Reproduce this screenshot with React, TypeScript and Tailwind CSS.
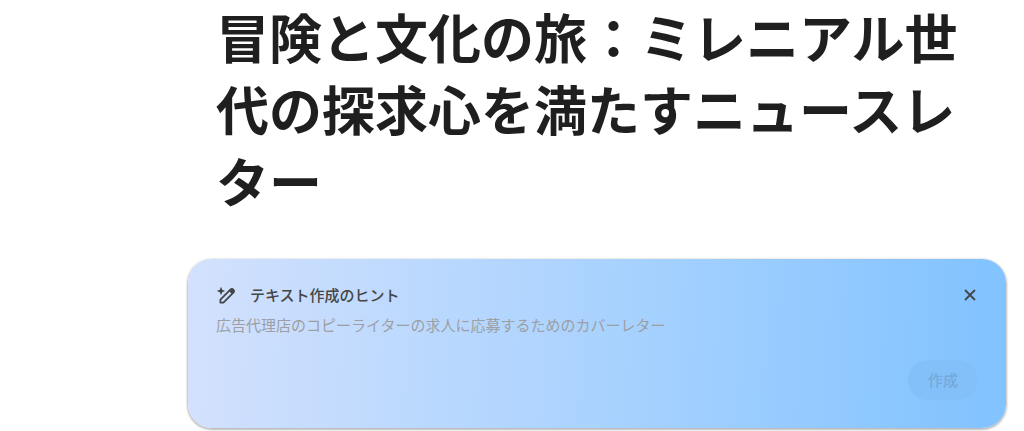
import React, { useState } from "react";

function MagicPencilIcon() {
  return (
    <svg viewBox="0 0 20 20" className="size-5 shrink-0" fill="none" aria-hidden="true">
      <path
        d="M5 1.8 L6.2 4.8 L9.2 6 L6.2 7.2 L5 10.2 L3.8 7.2 L0.8 6 L3.8 4.8 Z"
        fill="#444746"
      />
      <path
        d="M4.4 17.6 V14.6 L14.6 4.4 Q15.9 3.3 17.2 4.5 L17.5 4.8 Q18.7 6.1 17.6 7.4 L7.4 17.6 Z"
        stroke="#444746"
        strokeWidth="1.8"
        strokeLinejoin="round"
      />
      <path
        d="M12.9 6.1 L14.6 4.4 Q15.9 3.3 17.2 4.5 L17.5 4.8 Q18.7 6.1 17.6 7.4 L15.9 9.1 Z"
        fill="#444746"
      />
    </svg>
  );
}

function CloseIcon() {
  return (
    <svg viewBox="0 0 12 12" className="size-3" fill="none" aria-hidden="true">
      <path d="M1 1 L11 11 M11 1 L1 11" stroke="#444746" strokeWidth="1.8" />
    </svg>
  );
}

function PromptCard() {
  const [prompt, setPrompt] = useState("");
  return (
    <form
      onSubmit={(event) => event.preventDefault()}
      className="rounded-3xl bg-linear-[93deg,#d3e1fd_0%,#a0cfff_62%,#83c3ff_97%] px-7 pt-6 pb-7 shadow-[0_1px_2px_1px_rgba(60,64,67,0.35)]"
    >
      <div className="flex items-center justify-between">
        <label
          htmlFor="prompt"
          className="flex items-center gap-3.5 text-[15px] leading-6 font-medium text-[#444746]"
        >
          <MagicPencilIcon />
          テキスト作成のヒント
        </label>
        <button type="button" aria-label="閉じる" className="flex h-6 w-4 items-center justify-center">
          <CloseIcon />
        </button>
      </div>
      <textarea
        id="prompt"
        rows={1}
        value={prompt}
        onChange={(event) => setPrompt(event.target.value)}
        placeholder="広告代理店のコピーライターの求人に応募するためのカバーレター"
        className="mt-1.5 block w-full resize-none text-[15px] leading-6 text-[#444746] outline-none placeholder:text-[#9c9fa3]"
      />
      <div className="mt-[23px] flex justify-end">
        <button
          type="submit"
          disabled={!prompt}
          className="rounded-full bg-[#83c0fa] px-5 py-2 text-[15px] leading-6 font-medium text-[#74a9d8]"
        >
          作成
        </button>
      </div>
    </form>
  );
}

export default function App() {
  return (
    <main
      lang="ja"
      className="bg-white pr-[18px] pb-1 pl-[188px] font-['Noto_Sans_CJK_JP',sans-serif]"
    >
      <h1 className="px-7 pb-[43px] text-[53px] leading-[72px] font-bold text-[#1f1f1f]">
        冒険と文化の旅：ミレニアル世代の探求心を満たすニュースレター
      </h1>
      <PromptCard />
    </main>
  );
}
